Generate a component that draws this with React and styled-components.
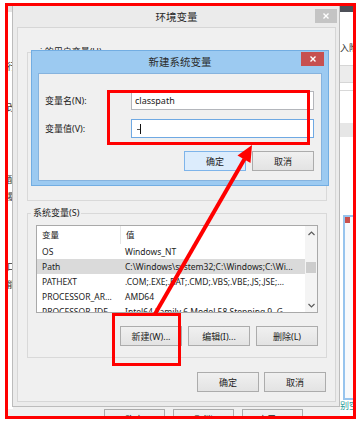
import React from 'react';
import styled, { createGlobalStyle } from 'styled-components';

const FONT = `"Noto Sans", "Noto Sans CJK SC", sans-serif`;

const GlobalStyle = createGlobalStyle`
  *, *::before, *::after { box-sizing: border-box; }
  html, body { margin: 0; padding: 0; background: #ffffff; }
  body { font-family: ${FONT}; color: #1b1b1b; }
`;

const Page = styled.div`
  position: relative;
  width: 357px;
  height: 421px;
  overflow: hidden;
  background: #ffffff;
`;

const Screen = styled.div`
  position: absolute;
  left: 5px;
  top: 3px;
  width: 351px;
  height: 415px;
  overflow: hidden;
  background: #f0f0f0;
`;

/* ---------- background window (system properties) ---------- */
const BackWindow = styled.div`
  position: absolute;
  left: 0;
  top: 0;
  width: 335px;
  height: 430px;
  display: flex;
  flex-direction: column;
  background: #f0f0f0;
`;
const BackBody = styled.div`
  height: 406px;
  flex: none;
  display: flex;
`;
const SidePanel = styled.div`
  width: 8px;
  display: flex;
  flex-direction: column;
  background: #ffffff;
  overflow: hidden;
`;
const SideTop = styled.div`
  height: 9px;
  flex: none;
  background: #e4e4e4;
`;
const SideText = styled.div`
  margin-top: ${(p) => p.$gap}px;
  height: 12px;
  line-height: 12px;
  font-size: 9px;
  padding-left: 2px;
  white-space: nowrap;
  color: #333;
`;
const BackFooter = styled.div`
  display: flex;
  gap: 8px;
  padding-left: 99px;
`;

/* ---------- right strip of other windows ---------- */
const RightPane = styled.div`
  position: absolute;
  left: 335px;
  top: 0;
  width: 16px;
  height: 415px;
  display: flex;
  flex-direction: column;
  background: #ffffff;
  overflow: hidden;
`;
const Block = styled.div`
  flex: none;
  height: ${(p) => p.$h}px;
  background: ${(p) => p.$bg || 'transparent'};
  border-top: ${(p) => (p.$lines ? '1px solid #d6d6d6' : 'none')};
  border-bottom: ${(p) => (p.$lines ? '1px solid #d6d6d6' : 'none')};
`;
const StripText = styled.div`
  flex: none;
  height: 12px;
  line-height: 12px;
  font-size: 9px;
  white-space: nowrap;
  color: ${(p) => p.$color || '#333'};
`;
const MiniWindow = styled.div`
  flex: none;
  height: 185px;
  margin-left: 3px;
  border: 2px solid #97c4ee;
  border-right: none;
  background: #f7f9fc;
  display: flex;
  flex-direction: column;
`;
const MiniClose = styled.div`
  width: 5px;
  height: 6px;
  background: #c9504c;
`;

/* ---------- windows ---------- */
const EnvWindow = styled.div`
  position: absolute;
  left: 7px;
  top: -1px;
  width: 328px;
  height: 405px;
  display: flex;
  flex-direction: column;
  padding: 0 3px 4px 4px;
  background: #ebebeb;
  border: 1px solid #bcbcbc;
`;

const NewWindow = styled.div`
  position: absolute;
  left: 26px;
  top: 47px;
  width: 298px;
  height: 136px;
  display: flex;
  flex-direction: column;
  padding: 0 6px 4px 6px;
  background: #9ccaf1;
  border: 1px solid #72ade2;
`;

const TitleBar = styled.div`
  flex: none;
  height: ${(p) => p.$h}px;
  display: grid;
  grid-template-columns: 1fr auto 1fr;
  align-items: center;
`;
const TitleText = styled.div`
  grid-column: 2;
  font-size: 10.5px;
  line-height: 14px;
  color: #2a2a2a;
  padding-top: ${(p) => p.$pt || 0}px;
  white-space: nowrap;
`;
const CloseButton = styled.div`
  grid-column: 3;
  justify-self: end;
  align-self: start;
  margin-top: ${(p) => p.$mt}px;
  margin-right: ${(p) => p.$mr}px;
  width: ${(p) => p.$w}px;
  height: 14px;
  display: flex;
  align-items: center;
  justify-content: center;
  background: ${(p) => p.$bg};
`;

const Client = styled.div`
  flex: 1;
  display: flex;
  flex-direction: column;
  background: #f0f0f0;
  border: 1px solid ${(p) => p.$border};
  padding: ${(p) => p.$pad};
`;

/* ---------- group boxes ---------- */
const Group = styled.fieldset`
  margin: ${(p) => p.$mt}px 0 0 0;
  padding: 0;
  min-width: 0;
  border: 1px solid #d9d9d9;
  height: ${(p) => (p.$h ? `${p.$h}px` : 'auto')};
`;
const Legend = styled.legend`
  margin-left: ${(p) => p.$ml}px;
  padding: 0 2px;
  font-size: 9px;
  line-height: 12px;
  color: #1b1b1b;
`;
const GroupBody = styled.div`
  padding: 6px 8px 11px 8px;
  display: flex;
  flex-direction: column;
`;

/* ---------- list view ---------- */
const ListView = styled.div`
  height: 88px;
  display: flex;
  border: 1px solid #a9a9a9;
  background: #ffffff;
  overflow: hidden;
`;
const ListBody = styled.div`
  flex: 1;
  min-width: 0;
  display: flex;
  flex-direction: column;
`;
const Row = styled.div`
  flex: none;
  display: grid;
  grid-template-columns: 83px 1fr;
  height: ${(p) => (p.$header ? 18 : 15)}px;
  background: ${(p) => (p.$selected ? '#dadada' : '#ffffff')};
  font-size: 8.5px;
  line-height: ${(p) => (p.$header ? 18 : 15)}px;
  color: #1b1b1b;
`;
const Cell = styled.div`
  padding-left: 5px;
  white-space: nowrap;
  overflow: hidden;
  border-left: ${(p) => (p.$divider ? '1px solid #e6e6e6' : 'none')};
`;
const ScrollBar = styled.div`
  flex: none;
  width: 12px;
  display: flex;
  flex-direction: column;
  background: #f4f4f4;
`;
const ScrollArrow = styled.div`
  flex: none;
  height: 14px;
  display: flex;
  align-items: center;
  justify-content: center;
`;
const ScrollTrack = styled.div`
  flex: 1;
  display: flex;
  flex-direction: column;
  align-items: center;
`;
const Thumb = styled.div`
  margin-top: 22px;
  width: 10px;
  height: 11px;
  background: #cdcdcd;
`;

/* ---------- buttons / form ---------- */
const ButtonRow = styled.div`
  display: flex;
  justify-content: flex-end;
  gap: ${(p) => p.$gap}px;
  margin-top: ${(p) => p.$mt}px;
  margin-right: ${(p) => p.$mr || 0}px;
`;
const Button = styled.div`
  width: ${(p) => p.$w || 62}px;
  height: 20px;
  flex: none;
  display: flex;
  align-items: center;
  justify-content: center;
  font-size: 9px;
  color: #1b1b1b;
  white-space: nowrap;
  border: 1px solid ${(p) => (p.$default ? '#7eb4ea' : '#acacac')};
  background: ${(p) => (p.$default ? '#dcecfc' : 'linear-gradient(#f0f0f0, #e3e3e3)')};
`;
const FormGrid = styled.div`
  display: grid;
  grid-template-columns: 86px 1fr;
  grid-auto-rows: 19px;
  row-gap: 9px;
  align-items: center;
`;
const Label = styled.div`
  font-size: 9px;
  color: #1b1b1b;
  white-space: nowrap;
`;
const Input = styled.div`
  height: 19px;
  display: flex;
  align-items: center;
  padding-left: 3px;
  background: #ffffff;
  border: 1px solid ${(p) => (p.$focused ? '#6fa9e3' : '#b4b6bb')};
  font-size: 9px;
  color: #1b1b1b;
`;
const Caret = styled.span`
  position: relative;
  margin-left: 5px;
  width: 1px;
  height: 10px;
  background: #111;
  &::before {
    content: '';
    position: absolute;
    left: -3px;
    top: 5px;
    width: 3px;
    height: 1px;
    background: #555;
  }
`;

/* ---------- annotations ---------- */
const RedBox = styled.div`
  position: absolute;
  left: ${(p) => p.$x}px;
  top: ${(p) => p.$y}px;
  width: ${(p) => p.$w}px;
  height: ${(p) => p.$h}px;
  border: 3px solid #ff0000;
  pointer-events: none;
`;
const ArrowLayer = styled.svg`
  position: absolute;
  left: 0;
  top: 0;
  width: 357px;
  height: 421px;
  pointer-events: none;
`;

const ROWS = [
  { name: 'OS', value: 'Windows_NT' },
  { name: 'Path', value: 'C:\\Windows\\system32;C:\\Windows;C:\\Wi...', selected: true },
  { name: 'PATHEXT', value: '.COM;.EXE;.BAT;.CMD;.VBS;.VBE;.JS;.JSE;...' },
  { name: 'PROCESSOR_AR...', value: 'AMD64' },
  { name: 'PROCESSOR_IDE...', value: 'Intel64 Family 6 Model 58 Stepping 9, G...' },
];

const SIDE = [
  { t: '行为', gap: 49 },
  { t: '改变', gap: 29 },
  { t: '配置', gap: 60 },
  { t: '暴露', gap: 5 },
  { t: '口令', gap: 58 },
  { t: '能力', gap: 6 },
];

const XIcon = ({ size = 6 }) => (
  <svg width={size} height={size} viewBox="0 0 6 6">
    <path d="M0.5 0.5 L5.5 5.5 M5.5 0.5 L0.5 5.5" stroke="#ffffff" strokeWidth="1.4" />
  </svg>
);

const Chevron = ({ up }) => (
  <svg width="7" height="5" viewBox="0 0 7 5">
    <polyline
      points={up ? '0.5,4 3.5,1 6.5,4' : '0.5,1 3.5,4 6.5,1'}
      fill="none"
      stroke="#5c5c5c"
      strokeWidth="1.2"
    />
  </svg>
);

export default function App() {
  return (
    <>
      <GlobalStyle />
      <Page>
        <Screen>
          <BackWindow>
            <BackBody>
              <SidePanel>
                <SideTop />
                {SIDE.map((s) => (
                  <SideText key={s.t} $gap={s.gap}>{s.t}</SideText>
                ))}
              </SidePanel>
            </BackBody>
            <BackFooter>
              <Button $w={61}>确定</Button>
              <Button $w={61}>取消</Button>
              <Button $w={61}>应用(A)</Button>
            </BackFooter>
          </BackWindow>

          <RightPane>
            <Block $h={9} $bg="#4d5058" />
            <Block $h={30} />
            <StripText>入附件</StripText>
            <Block $h={11} />
            <Block $h={18} $bg="#ececec" $lines />
            <Block $h={7} />
            <Block $h={1} $bg="#d8d8d8" />
            <Block $h={32} />
            <Block $h={14} $bg="#e6e6e6" />
            <Block $h={78} />
            <MiniWindow>
              <MiniClose />
            </MiniWindow>
            <StripText $color="#2a9d9a">别空</StripText>
          </RightPane>

          <EnvWindow>
            <TitleBar $h={24}>
              <TitleText $pt={3}>环境变量</TitleText>
              <CloseButton $mt={6} $mr={-1} $w={22} $bg="#c4c4c4">
                <XIcon />
              </CloseButton>
            </TitleBar>
            <Client $border="#d6d6d6" $pad="0 8px 0 9px">
              <Group $mt={18} $h={155}>
                <Legend $ml={10}>i 的用户变量(U)</Legend>
              </Group>
              <Group $mt={6}>
                <Legend $ml={3}>系统变量(S)</Legend>
                <GroupBody>
                  <ListView>
                    <ListBody>
                      <Row $header>
                        <Cell>变量</Cell>
                        <Cell $divider>值</Cell>
                      </Row>
                      {ROWS.map((r) => (
                        <Row key={r.name} $selected={r.selected}>
                          <Cell>{r.name}</Cell>
                          <Cell>{r.value}</Cell>
                        </Row>
                      ))}
                    </ListBody>
                    <ScrollBar>
                      <ScrollArrow>
                        <Chevron up />
                      </ScrollArrow>
                      <ScrollTrack>
                        <Thumb />
                      </ScrollTrack>
                      <ScrollArrow>
                        <Chevron />
                      </ScrollArrow>
                    </ScrollBar>
                  </ListView>
                  <ButtonRow $gap={6} $mt={13}>
                    <Button>新建(W)...</Button>
                    <Button>编辑(I)...</Button>
                    <Button>删除(L)</Button>
                  </ButtonRow>
                </GroupBody>
              </Group>
              <ButtonRow $gap={5} $mt={14} $mr={1}>
                <Button>确定</Button>
                <Button>取消</Button>
              </ButtonRow>
            </Client>
          </EnvWindow>

          <NewWindow>
            <TitleBar $h={22}>
              <TitleText>新建系统变量</TitleText>
              <CloseButton $mt={1} $mr={-2} $w={23} $bg="#c75050">
                <XIcon />
              </CloseButton>
            </TitleBar>
            <Client $border="#86b3de" $pad="17px 7px 0 6px">
              <FormGrid>
                <Label>变量名(N):</Label>
                <Input>classpath</Input>
                <Label>变量值(V):</Label>
                <Input $focused>
                  <Caret />
                </Input>
              </FormGrid>
              <ButtonRow $gap={6} $mt={13}>
                <Button $default>确定</Button>
                <Button>取消</Button>
              </ButtonRow>
            </Client>
          </NewWindow>
        </Screen>

        <RedBox $x={5} $y={3} $w={351} $h={416} />
        <RedBox $x={107} $y={90} $w={203} $h={55} />
        <RedBox $x={112} $y={313} $w={69} $h={53} />
        <ArrowLayer viewBox="0 0 357 421">
          <line x1="155" y1="314" x2="244.5" y2="159" stroke="#ff0000" strokeWidth="4" />
          <polygon points="252,145 250.5,163 237.5,155.5" fill="#ff0000" />
        </ArrowLayer>
      </Page>
    </>
  );
}
